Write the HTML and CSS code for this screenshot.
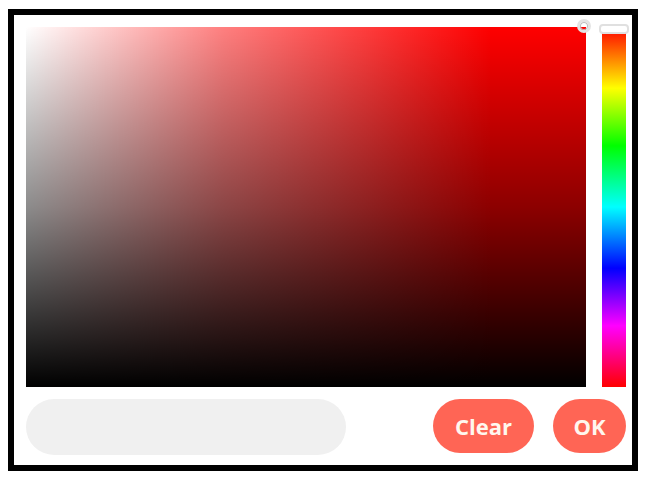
FILE: index.html
```html
<!DOCTYPE html>
<html>
<head>
<meta charset="utf-8">
<link rel="stylesheet" href="styles.css">
</head>
<body>
<div class="picker">
  <div class="top">
    <div class="sat">
      <div class="sat-white"></div>
      <div class="sat-black"></div>
      <div class="sat-handle"></div>
    </div>
    <div class="hue">
      <div class="hue-handle"></div>
    </div>
  </div>
  <div class="bottom">
    <div class="input"></div>
    <div class="buttons">
      <button class="btn clear">Clear</button>
      <button class="btn ok">OK</button>
    </div>
  </div>
</div>
</body>
</html>
```
FILE: styles.css
```css
html, body { background: #fff; }
body { margin: 9px 8px; font-family: "Open Sans", "Noto Sans", sans-serif; }
.picker {
  box-sizing: border-box;
  width: 630px;
  height: 462px;
  border: 6px solid #000;
  background: #fff;
  padding: 12px 6px 10px 12px;
  display: flex;
  flex-direction: column;
  gap: 12px;
}
.top { display: flex; gap: 16px; height: 360px; }
.sat {
  position: relative;
  width: 560px;
  height: 360px;
  background: #f00;
}
.sat-white, .sat-black { position: absolute; inset: 0; }
.sat-white { background: linear-gradient(to right, #fff 0%, rgba(255,255,255,0.5) 35%, rgba(255,255,255,0) 83%); }
.sat-black { background: linear-gradient(to bottom, rgba(0,0,0,0) 0%, rgba(0,0,0,0.45) 50%, #000 100%); }
.sat-handle {
  position: absolute;
  right: -5px;
  top: -8px;
  width: 8px;
  height: 8px;
  border-radius: 50%;
  border: 3px solid #e4e4e4;
  box-shadow: inset 0 0 0 1px #bbb;
}
.hue {
  position: relative;
  width: 24px;
  height: 360px;
  background: linear-gradient(to bottom, #f00 0%, #ff0 17%, #0f0 33%, #0ff 50%, #00f 67%, #f0f 83%, #f00 100%);
}
.hue-handle {
  position: absolute;
  left: -3px;
  top: -3px;
  width: 26px;
  height: 6px;
  background: #fff;
  border: 2px solid #e0e0e0;
  border-radius: 4px;
}
.bottom { display: flex; align-items: flex-start; justify-content: space-between; }
.input {
  width: 320px;
  height: 56px;
  border-radius: 28px;
  background: #f0f0f0;
}
.buttons { display: flex; gap: 19px; }
.btn {
  height: 54px;
  border: 0;
  border-radius: 27px;
  background: #ff6555;
  color: #fff7ee;
  font-family: "Open Sans", "Noto Sans", sans-serif;
  font-weight: 700;
  font-size: 22px;
  padding: 0;
}
.clear { width: 101px; }
.ok { width: 73px; }
```
